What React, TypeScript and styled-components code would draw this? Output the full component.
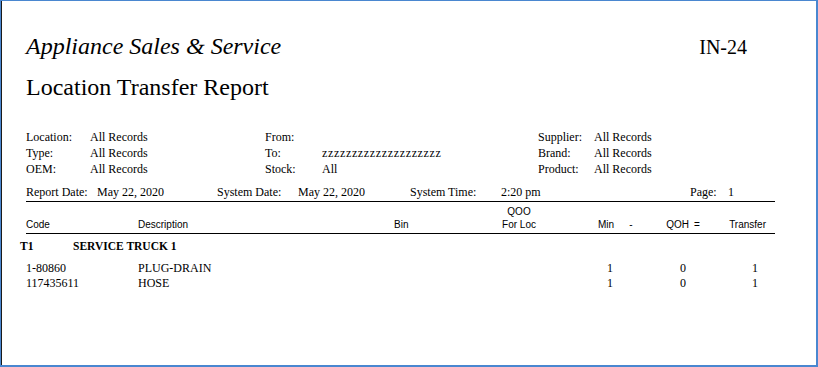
import React from 'react';
import styled, { createGlobalStyle } from 'styled-components';

const GlobalStyle = createGlobalStyle`
  html, body {
    margin: 0;
    padding: 0;
    background: #ffffff;
  }
  * {
    box-sizing: border-box;
  }
`;

interface InfoItem {
  label: string;
  value: string;
  spread?: boolean;
}

interface ItemRow {
  code: string;
  description: string;
  min: number;
  qoh: number;
  transfer: number;
}

const leftInfo: InfoItem[] = [
  { label: 'Location:', value: 'All Records' },
  { label: 'Type:', value: 'All Records' },
  { label: 'OEM:', value: 'All Records' },
];

const midInfo: InfoItem[] = [
  { label: 'From:', value: '' },
  { label: 'To:', value: 'zzzzzzzzzzzzzzzzzzzz', spread: true },
  { label: 'Stock:', value: 'All' },
];

const rightInfo: InfoItem[] = [
  { label: 'Supplier:', value: 'All Records' },
  { label: 'Brand:', value: 'All Records' },
  { label: 'Product:', value: 'All Records' },
];

const items: ItemRow[] = [
  { code: '1-80860', description: 'PLUG-DRAIN', min: 1, qoh: 0, transfer: 1 },
  { code: '117435611', description: 'HOSE', min: 1, qoh: 0, transfer: 1 },
];

const InfoGroup: React.FC<{ rows: InfoItem[]; labelWidth: number; width: number }> = ({
  rows,
  labelWidth,
  width,
}) => (
  <InfoColumn $labelWidth={labelWidth} $width={width}>
    {rows.map((r) => (
      <React.Fragment key={r.label}>
        <span>{r.label}</span>
        <InfoValue $spread={r.spread}>{r.value}</InfoValue>
      </React.Fragment>
    ))}
  </InfoColumn>
);

const App: React.FC = () => {
  return (
    <>
      <GlobalStyle />
      <Frame>
        <Report>
          <TitleRow>
            <CompanyName>Appliance Sales &amp; Service</CompanyName>
            <ReportCode>IN-24</ReportCode>
          </TitleRow>
          <ReportTitle>Location Transfer Report</ReportTitle>

          <InfoBlock>
            <InfoGroup rows={leftInfo} labelWidth={64} width={239} />
            <InfoGroup rows={midInfo} labelWidth={57} width={273} />
            <InfoGroup rows={rightInfo} labelWidth={56} width={200} />
          </InfoBlock>

          <DateRow>
            <span>Report Date:</span>
            <span>May 22, 2020</span>
            <span>System Date:</span>
            <span>May 22, 2020</span>
            <span>System Time:</span>
            <span>2:20 pm</span>
            <span>Page:</span>
            <span>1</span>
          </DateRow>

          <HeaderTable>
            <HeadCell $row={2}>Code</HeadCell>
            <HeadCell $row={2}>Description</HeadCell>
            <HeadCell $row={2}>Bin</HeadCell>
            <HeadCell $row={1} $align="center">
              QOO
              <br />
              For Loc
            </HeadCell>
            <HeadCell $row={2} $align="right">Min</HeadCell>
            <HeadCell $row={2} $align="center">-</HeadCell>
            <HeadCell $row={2} $align="right">QOH</HeadCell>
            <HeadCell $row={2} $align="center">=</HeadCell>
            <HeadCell $row={2} $align="right" $padRight={9}>Transfer</HeadCell>
          </HeaderTable>

          <LocationHeading>
            <span>T1</span>
            <span>SERVICE TRUCK 1</span>
          </LocationHeading>

          <ItemList>
            {items.map((it) => (
              <ItemLine key={it.code}>
                <span>{it.code}</span>
                <span>{it.description}</span>
                <NumCell>{it.min}</NumCell>
                <NumCell>{it.qoh}</NumCell>
                <NumCell>{it.transfer}</NumCell>
              </ItemLine>
            ))}
          </ItemList>
        </Report>
      </Frame>
    </>
  );
};

const Frame = styled.div`
  width: 818px;
  height: 367px;
  background: #ffffff;
  border-top: 1px solid #4a87d0;
  border-left: 1px solid #4a87d0;
  border-right: 2px solid #4a87d0;
  border-bottom: 2px solid #4a87d0;
  box-shadow: inset 1px 0 0 #1a1a1a;
  overflow: hidden;
`;

const Report = styled.div`
  width: 774px;
  padding: 0 0 0 25px;
  color: #000000;
  font-family: 'Liberation Serif', 'Times New Roman', serif;
`;

const TitleRow = styled.div`
  display: flex;
  align-items: baseline;
  justify-content: space-between;
  padding-top: 32px;
  padding-right: 28px;
`;

const CompanyName = styled.div`
  font-size: 24px;
  line-height: 26px;
  font-style: italic;
`;

const ReportCode = styled.div`
  font-size: 20px;
  line-height: 24px;
`;

const ReportTitle = styled.div`
  margin-top: 15px;
  font-size: 24px;
  line-height: 26px;
`;

const InfoBlock = styled.div`
  display: flex;
  margin-top: 29px;
`;

const InfoColumn = styled.div<{ $labelWidth: number; $width: number }>`
  display: grid;
  grid-template-columns: ${(p) => p.$labelWidth}px 1fr;
  width: ${(p) => p.$width}px;
  font-size: 12px;
  line-height: 16px;
`;

const InfoValue = styled.span<{ $spread?: boolean }>`
  letter-spacing: ${(p) => (p.$spread ? '0.65px' : 'normal')};
  white-space: nowrap;
`;

const DateRow = styled.div`
  display: grid;
  grid-template-columns: 71px 120px 81px 112px 91px 189px 38px 1fr;
  margin-top: 7px;
  font-size: 12px;
  line-height: 16px;
  border-bottom: 1px solid #000000;
  padding-bottom: 1px;
`;

const HeaderTable = styled.div`
  display: grid;
  grid-template-columns: 112px 256px 100px 50px 70px 34px 41px 16px 1fr;
  grid-template-rows: 13px 13px;
  padding: 3px 0 2px;
  border-bottom: 1px solid #000000;
  font-family: 'Liberation Sans', Arial, sans-serif;
  font-size: 10px;
  line-height: 13px;
`;

const HeadCell = styled.div<{ $row: number; $align?: 'left' | 'center' | 'right'; $padRight?: number }>`
  grid-row: ${(p) => (p.$row === 1 ? '1 / span 2' : '2')};
  text-align: ${(p) => p.$align ?? 'left'};
  padding-right: ${(p) => p.$padRight ?? 0}px;
  white-space: nowrap;
`;

const LocationHeading = styled.div`
  display: grid;
  grid-template-columns: 53px 1fr;
  margin: 4px 0 0 -6px;
  font-size: 11.5px;
  line-height: 16px;
  font-weight: bold;
`;

const ItemList = styled.div`
  margin-top: 7px;
`;

const ItemLine = styled.div`
  display: grid;
  grid-template-columns: 112px 256px 219px 73px 72px;
  font-size: 12px;
  line-height: 15px;
`;

const NumCell = styled.span`
  text-align: right;
`;

export default App;
